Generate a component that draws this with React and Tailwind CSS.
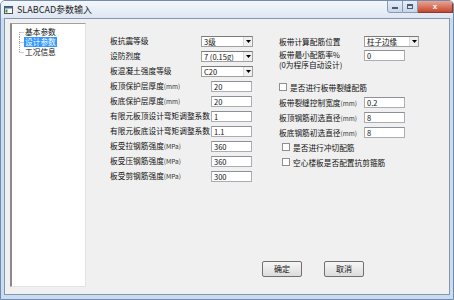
import React from 'react';

const TextBox = ({ value }) => (
  <div className="h-[11px] w-[41px] shrink-0 bg-white border border-[#abadb3] border-t-[#8e9099] flex items-center pl-[2px] text-[7.5px] leading-none">
    {value}
  </div>
);

const Combo = ({ value, w }) => (
  <div className={`h-[11px] ${w} shrink-0 bg-white border border-[#a0a0a0] border-t-[#7a7a7a] flex items-stretch`}>
    <span className="flex-1 flex items-center pl-[2px] text-[7.5px] leading-none overflow-hidden whitespace-nowrap">{value}</span>
    <span className="w-[9px] bg-[#f0f0f0] border-l border-[#d8d8d8] flex items-center justify-center">
      <svg width="5" height="3" viewBox="0 0 5 3"><path d="M0 0h5L2.5 3z" fill="#000" /></svg>
    </span>
  </div>
);

const Check = ({ label }) => (
  <div className="flex items-center gap-[3px]">
    <span className="w-[8px] h-[8px] bg-white border border-[#8f8f8f] shrink-0" />
    <span>{label}</span>
  </div>
);

const Unit = ({ children }) => <span className="text-[6.5px] text-[#333]">{children}</span>;

const leftRows = [
  { label: '板抗震等级', combo: '3级' },
  { label: '设防烈度', combo: '7 (0.15g)' },
  { label: '板混凝土强度等级', combo: 'C20' },
  { label: '板顶保护层厚度', unit: '(mm)', value: '20' },
  { label: '板底保护层厚度', unit: '(mm)', value: '20' },
  { label: '有限元板顶设计弯矩调整系数', value: '1' },
  { label: '有限元板底设计弯矩调整系数', value: '1.1' },
  { label: '板受拉钢筋强度', unit: '(MPa)', value: '360' },
  { label: '板受压钢筋强度', unit: '(MPa)', value: '360' },
  { label: '板受剪钢筋强度', unit: '(MPa)', value: '300' },
];

const TreeItem = ({ label, first, last, selected }) => (
  <div className="flex items-center h-[10px] pl-[5px]">
    <svg width="7" height="10" viewBox="0 0 7 10" className="shrink-0">
      <line x1="2.5" y1={first ? 5 : 0} x2="2.5" y2={last ? 5 : 10} stroke="#a0a0a0" strokeDasharray="1 1" />
      <line x1="2.5" y1="5.5" x2="7" y2="5.5" stroke="#a0a0a0" strokeDasharray="1 1" />
    </svg>
    <span className={`px-[1px] h-[10px] flex items-center ${selected ? 'bg-[#3399ff] text-white' : ''}`}>{label}</span>
  </div>
);

export default function App() {
  return (
    <div className="w-[454px] h-[300px] bg-[#c9dcf2] border border-[#6f8cb0] rounded-t-[5px] flex flex-col overflow-hidden font-['Noto_Sans_CJK_SC','Liberation_Sans',sans-serif] text-[7.7px] text-[#111]">
      {/* title bar */}
      <div className="h-[17px] shrink-0 flex items-start bg-gradient-to-b from-[#f4f7fb] to-[#dde7f3]">
        <div className="flex items-center h-[17px] pl-[3px] gap-[4px] flex-1">
          <svg width="9" height="8" viewBox="0 0 9 8">
            <rect x="0.5" y="0.5" width="8" height="7" fill="#fff" stroke="#555" />
            <rect x="1" y="1" width="7" height="1.5" fill="#3b6fb5" />
            <rect x="1.5" y="3.5" width="2" height="3" fill="#3c9a3c" />
          </svg>
          <span className="text-[9px] text-[#1e1e1e] leading-none">SLABCAD参数输入</span>
        </div>
        <div className="flex h-[13px] -mt-[1px]">
          <div className="w-[16px] border border-[#8799b3] rounded-bl-[3px] bg-gradient-to-b from-[#e6edf6] to-[#c9d6e7] flex items-center justify-center">
            <span className="w-[6px] h-[2px] bg-[#4b5c74] mt-[3px]" />
          </div>
          <div className="w-[15px] border-y border-r border-[#8799b3] bg-gradient-to-b from-[#e6edf6] to-[#c9d6e7] flex items-center justify-center">
            <span className="w-[6px] h-[5px] border border-[#4b5c74] border-t-2" />
          </div>
          <div className="w-[35px] border-y border-r border-[#8a3a2e] bg-gradient-to-b from-[#e8a593] to-[#c5452d] flex items-center justify-center">
            <span className="text-white text-[8px] font-bold leading-none font-['Liberation_Sans',sans-serif]">x</span>
          </div>
        </div>
      </div>

      {/* client area */}
      <div className="flex-1 mx-[3px] mb-[4px] bg-[#f0f0f0] border border-[#8797ab] flex">
        {/* tree */}
        <div className="mt-[4px] ml-[5px] w-[76px] h-[264px] shrink-0 bg-white border border-[#a0a0a0] border-r-[#e3e3e3] border-b-[#e3e3e3] border-l-2 border-l-[#8a8a8a] pt-[3px]">
          <TreeItem label="基本参数" first />
          <TreeItem label="设计参数" selected />
          <TreeItem label="工况信息" last />
        </div>

        <div className="flex-1 flex flex-col">
          <div className="flex mt-[15px] ml-[24px]">
            {/* left column */}
            <div className="w-[143px] flex flex-col">
              {leftRows.map((r) => (
                <div key={r.label} className="h-[15px] flex items-center justify-between">
                  <span className="whitespace-nowrap -mt-[2px]">
                    {r.label}
                    {r.unit && <Unit>{r.unit}</Unit>}
                  </span>
                  {r.combo ? <Combo value={r.combo} w="w-[52px]" /> : <div className="mr-[1px]"><TextBox value={r.value} /></div>}
                </div>
              ))}
            </div>

            {/* right column */}
            <div className="ml-[26px] w-[140px] flex flex-col">
              <div className="h-[15px] flex items-center">
                <span className="w-[85px] whitespace-nowrap">板带计算配筋位置</span>
                <Combo value="柱子边缘" w="w-[55px]" />
              </div>
              <div className="h-[31px] flex items-start pt-[1px]">
                <span className="w-[85px] leading-[10px] whitespace-nowrap">
                  板带最小配筋率%<br />(0为程序自动设计)
                </span>
                <TextBox value="0" />
              </div>
              <div className="h-[15px] flex items-center">
                <Check label="是否进行板带裂缝配筋" />
              </div>
              <div className="h-[15px] flex items-center">
                <span className="w-[85px] whitespace-nowrap">板带裂缝控制宽度<Unit>(mm)</Unit></span>
                <TextBox value="0.2" />
              </div>
              <div className="h-[15px] flex items-center">
                <span className="w-[85px] whitespace-nowrap">板顶钢筋初选直径<Unit>(mm)</Unit></span>
                <TextBox value="8" />
              </div>
              <div className="h-[15px] flex items-center">
                <span className="w-[85px] whitespace-nowrap">板底钢筋初选直径<Unit>(mm)</Unit></span>
                <TextBox value="8" />
              </div>
              <div className="h-[15px] flex items-center pl-[3px]">
                <Check label="是否进行冲切配筋" />
              </div>
              <div className="h-[15px] flex items-center pl-[3px]">
                <Check label="空心楼板是否配置抗剪箍筋" />
              </div>
            </div>
          </div>

          {/* buttons */}
          <div className="mt-auto mb-[17px] flex gap-[22px] pl-[176px]">
            <button className="w-[40px] h-[16px] bg-gradient-to-b from-[#f6f6f6] to-[#dcdcdc] border border-[#707070] rounded-[2px] text-[8px] leading-none flex items-center justify-center">确定</button>
            <button className="w-[40px] h-[16px] bg-gradient-to-b from-[#f6f6f6] to-[#dcdcdc] border border-[#707070] rounded-[2px] text-[8px] leading-none flex items-center justify-center">取消</button>
          </div>
        </div>
      </div>
    </div>
  );
}
